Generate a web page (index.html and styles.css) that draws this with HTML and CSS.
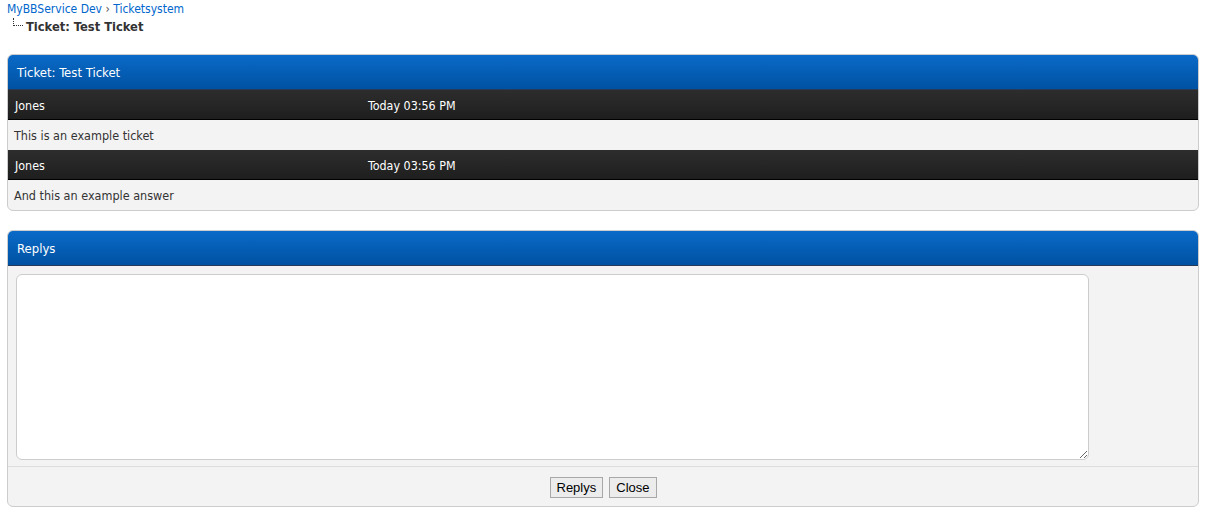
FILE: index.html
```html
<!DOCTYPE html>
<html>
<head>
<meta charset="utf-8">
<link rel="stylesheet" href="styles.css">
</head>
<body>
<div class="navigation">
  <div class="crumbs"><a href="#">MyBBService Dev</a> <span class="sep">›</span> <a href="#">Ticketsystem</a></div>
  <div class="active"><span class="branch"></span><span class="current">Ticket: Test Ticket</span></div>
</div>

<div class="tborder">
  <div class="thead">Ticket: Test Ticket</div>
  <div class="tcat"><span class="author">Jones</span><span class="date">Today 03:56 PM</span></div>
  <div class="trow">This is an example ticket</div>
  <div class="tcat"><span class="author">Jones</span><span class="date">Today 03:56 PM</span></div>
  <div class="trow">And this an example answer</div>
</div>

<div class="tborder second">
  <div class="thead">Replys</div>
  <div class="reply-body"><textarea class="reply-text"></textarea></div>
  <div class="actions">
    <button class="btn">Replys</button>
    <button class="btn">Close</button>
  </div>
</div>
</body>
</html>
```
FILE: styles.css
```css
body {
  margin: 0;
  background: #fff;
  font-family: "DejaVu Sans Condensed", "DejaVu Sans", sans-serif;
  font-size: 12px;
  color: #333;
}
a { color: #0066cc; text-decoration: none; }
.navigation {
  padding: 2px 0 0 7px;
  height: 54px;
  box-sizing: border-box;
}
.crumbs { height: 15px; line-height: 15px; font-size: 12px; }
.sep { color: #555; }
.active {
  display: flex;
  align-items: flex-start;
  height: 18px;
  margin-top: 1px;
}
.branch {
  width: 9px;
  height: 7px;
  margin: 0 3px 0 6px;
  border-left: 1px dotted #333;
  border-bottom: 1px dotted #333;
}
.current {
  font-weight: bold;
  font-size: 12.8px;
  color: #333;
  line-height: 18px;
}
.tborder {
  margin: 0 6px 0 7px;
  border: 1px solid #ccc;
  border-radius: 6px;
  background: #f3f3f3;
  overflow: hidden;
}
.tborder.second { margin-top: 19px; }
.thead {
  height: 34px;
  line-height: 35px;
  padding-left: 9px;
  color: #fff;
  font-size: 13px;
  background: linear-gradient(to bottom, #0a6ac8 0%, #0052a2 100%);
  border-bottom: 1px solid #263c56;
}
.tcat {
  display: flex;
  height: 29px;
  line-height: 31px;
  padding-left: 7px;
  color: #fff;
  font-size: 12.4px;
  background: linear-gradient(to bottom, #2d2d2d 0%, #262626 50%, #1e1e1e 100%);
  border-bottom: 1px solid #000;
}
.author { width: 353px; }
.trow {
  height: 30px;
  line-height: 32px;
  padding-left: 6px;
  font-size: 12.5px;
  color: #333;
}
.reply-body {
  padding: 8px 8px 6px 8px;
  border-bottom: 1px solid #ddd;
}
.reply-text {
  display: block;
  width: 1073px;
  height: 186px;
  box-sizing: border-box;
  border: 1px solid #ccc;
  border-radius: 6px;
  background: #fff;
  margin: 0;
  resize: both;
}
.actions {
  height: 39px;
  display: flex;
  justify-content: center;
  align-items: flex-start;
  gap: 6px;
  padding-top: 10px;
  box-sizing: border-box;
}
.btn {
  font-family: "Liberation Sans", Arial, sans-serif;
  font-size: 13px;
  color: #000;
  height: 21px;
  padding: 0 6px;
  background: #ececec;
  border: 1px solid #a8a8a8;
  border-radius: 0;
  line-height: 19px;
}
```
